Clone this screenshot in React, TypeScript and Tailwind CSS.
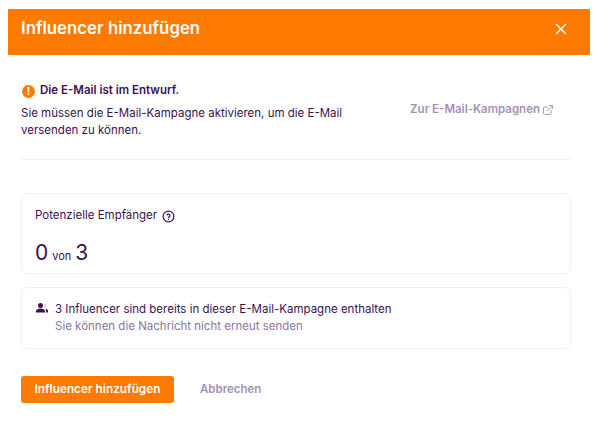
import { ExternalLink, X } from "lucide-react";

const font = { fontFamily: "Inter, sans-serif" };

export default function App() {
  return (
    <div
      className="w-[601px] h-[425px] bg-white pt-[9px] pl-[8px] overflow-hidden text-[#3c1053] font-['Inter',sans-serif]"
      style={font}
    >
      <div className="w-[582px]">
        <header className="h-[46px] bg-[#ff7a00] flex items-center justify-between pl-[13px] pr-[20px] pb-[7px]">
          <h1 className="text-[16.8px] font-semibold text-white">Influencer hinzufügen</h1>
          <X size={18} strokeWidth={2} className="text-white" />
        </header>

        <div className="pl-[13px] pr-[19px]">
          <div className="h-[105px] border-b border-[#eeeef4] flex justify-between pt-[28px]">
            <div className="w-[345px]">
              <div className="flex items-center gap-[5px] h-[16px] pl-[1px]">
                <span className="w-[13px] h-[13px] rounded-full bg-[#ff7a00] text-white text-[10px] font-bold flex items-center justify-center leading-none">
                  !
                </span>
                <span className="text-[11.5px] font-semibold">Die E-Mail ist im Entwurf.</span>
              </div>
              <p className="mt-[6px] text-[11.5px] leading-[17px]">
                Sie müssen die E-Mail-Kampagne aktivieren, um die E-Mail versenden zu können.
              </p>
            </div>
            <div className="flex items-center gap-[2px] h-[16px] mt-[19px] mr-[17px] text-[#a491b5]">
              <span className="text-[11.5px] font-semibold">Zur E-Mail-Kampagnen</span>
              <ExternalLink size={12} strokeWidth={1.8} />
            </div>
          </div>

          <section className="mt-[33px] h-[81px] border border-[#f0f0f5] rounded-[6px] pl-[13px] pt-[14px]">
            <div className="flex items-center gap-[5px] h-[16px] text-[11.5px]">
              Potenzielle Empfänger
              <svg width="13" height="13" viewBox="0 0 24 24" fill="none" stroke="currentColor" strokeWidth="2.2" strokeLinecap="round">
                <circle cx="12" cy="12" r="10" />
                <path d="M9.200 9.200a3 3 0 0 1 5.700 1c0 2-2.900 2.600-2.900 4" />
                <path d="M12 17.500h.01" />
              </svg>
            </div>
            <div className="flex items-baseline mt-[13px] h-[26px]">
              <span className="text-[21px]">0</span>
              <span className="text-[11px] mx-[4px]">von</span>
              <span className="text-[21px]">3</span>
            </div>
          </section>

          <section className="mt-[13px] h-[62px] border border-[#f0f0f5] rounded-[6px] pl-[14px] pt-[13px] flex items-start gap-[7px]">
            <svg width="12" height="12" viewBox="0 0 24 24" className="mt-[1px] shrink-0" fill="currentColor">
              <circle cx="9" cy="7" r="5" />
              <path d="M0 21v-3c0-3 4-5 9-5s9 2 9 5v3z" />
              <path d="M16 2.500a5 5 0 0 1 0 9 6 6 0 0 0 0-9z" />
              <path d="M19 13.500c3 .5 5 2 5 4.500v3h-4v-3c0-2-.4-3.300-1-4.500z" />
            </svg>
            <div className="text-[11.5px] leading-[17px]">
              <div>3 Influencer sind bereits in dieser E-Mail-Kampagne enthalten</div>
              <div className="text-[#8a76a0]">Sie können die Nachricht nicht erneut senden</div>
            </div>
          </section>

          <div className="mt-[27px] flex items-center">
            <button className="w-[153px] h-[27px] bg-[#ff7a00] text-white rounded-[3px] text-[11.8px] font-semibold">
              Influencer hinzufügen
            </button>
            <button className="ml-[26px] text-[11.5px] font-semibold text-[#a491b5]">Abbrechen</button>
          </div>
        </div>
      </div>
    </div>
  );
}
